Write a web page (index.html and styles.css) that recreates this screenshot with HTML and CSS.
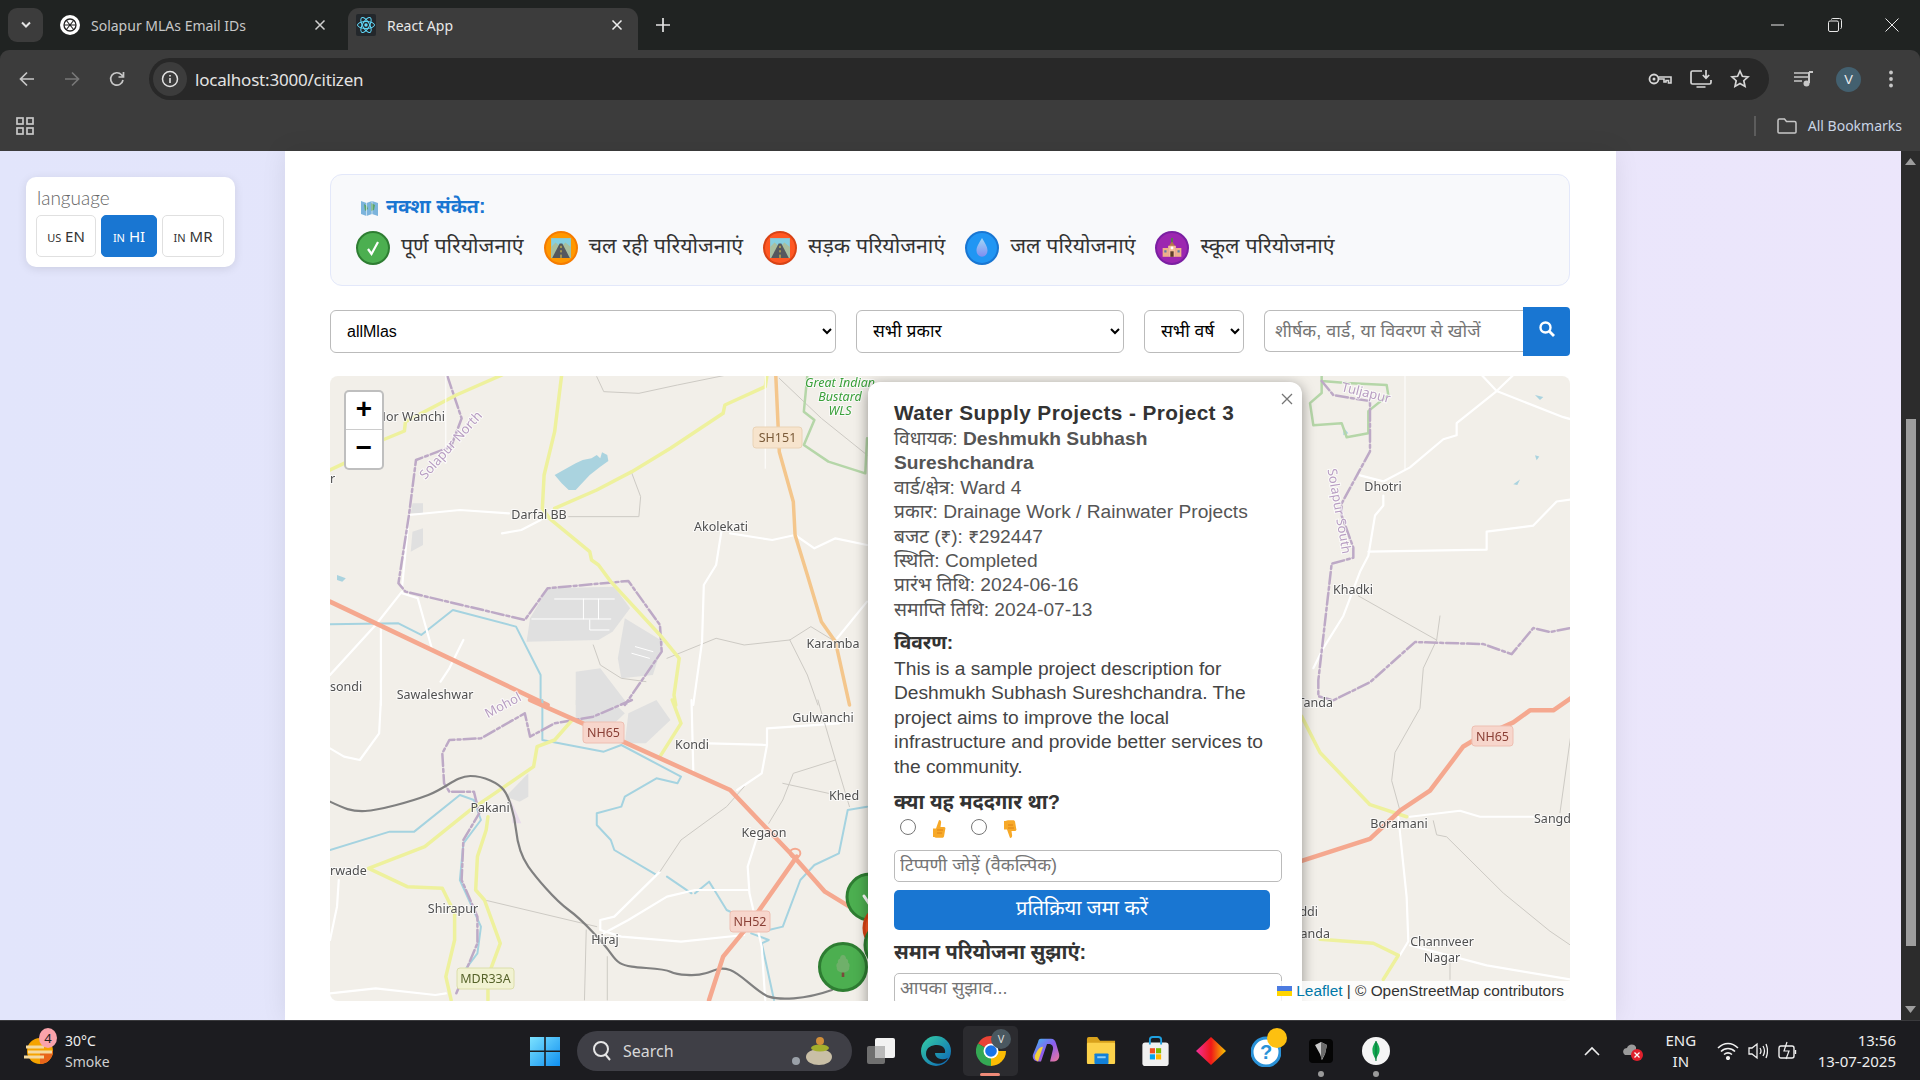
FILE: index.html
```html
<!DOCTYPE html>
<html lang="hi">
<head>
  <meta charset="UTF-8" />
  <title>React App</title>
  <link rel="stylesheet" href="styles.css">
</head>
<body>
  <svg class="sprites" width="0" height="0" aria-hidden="true">
    <defs>
      <symbol id="i-road" viewBox="0 0 20 20">
        <rect x="1" y="1" width="18" height="18" fill="#86cfe0"/>
        <path d="M1 9l4-4 5 4 4-4 5 4v10H1z" fill="#a9bfa0"/>
        <path d="M8.800 6h2.400L18 19H2z" fill="#55585e"/>
        <path d="M10 8v2m0 2v2m0 2v3" stroke="#f3d34a" stroke-width=".9" fill="none"/>
      </symbol>
      <symbol id="i-drop" viewBox="0 0 20 20">
        <defs><linearGradient id="g-drop" x1="0" y1="0" x2="0" y2="1"><stop offset="0" stop-color="#9fd7f7"/><stop offset="1" stop-color="#7f8df0"/></linearGradient></defs>
        <path d="M10 1c3 5 5 8 5 11.500a5 5.500 0 0 1-10 0C5 9 7 6 10 1z" fill="url(#g-drop)"/>
      </symbol>
      <symbol id="i-school" viewBox="0 0 20 20">
        <path d="M10 1v4" stroke="#4c8c3c" stroke-width="1.500"/>
        <path d="M6.500 9L10 4l3.500 5z" fill="#b5754d"/>
        <rect x="6.500" y="8" width="7" height="10" fill="#f3bd97"/>
        <rect x="1.500" y="10" width="5" height="8" fill="#eeb08a"/>
        <rect x="13.500" y="10" width="5" height="8" fill="#eeb08a"/>
        <rect x="8.500" y="13" width="3" height="5" fill="#5b3b2a"/>
        <circle cx="10" cy="10" r="1.300" fill="#fff"/>
        <path d="M3 12h2v2H3zm12 0h2v2h-2z" fill="#5a7fa8"/>
      </symbol>
      <symbol id="i-thumb" viewBox="0 0 20 20">
        <path d="M4 9.500h3L10 1c1.800 0 2.500 1.500 2 3.500L11.500 8H15c1.300 0 1.800 1.300 1.200 2.400L15 17.500c-.4.900-1 1.300-2 1.300H8c-1.500 0-2-.8-4-.8z" fill="#f7a928"/>
        <path d="M8 11h6M8 14h5" stroke="#e08214" stroke-width="1"/>
      </symbol>
      <symbol id="i-tree" viewBox="0 0 20 24">
        <rect x="8.700" y="18" width="2.600" height="5" fill="#7a4a3a"/>
        <path d="M10 1c2 0 3 2 3 3.500 2 .6 2.500 2.500 2 4 1.800 1 2 3.500 1.200 5 .6 2.500-2 5-6.200 5s-6.800-2.500-6.200-5C3 12 3.200 9.500 5 8.500c-.5-1.500 0-3.400 2-4C7 3 8 1 10 1z" fill="#6fb06a"/>
      </symbol>
    </defs>
  </svg>

  <header class="chrome">
    <div class="tabstrip">
      <div class="tab-search"><svg width="12" height="8" viewBox="0 0 12 8"><path d="M2 1.500l4 4 4-4" stroke="#e3e3e3" stroke-width="2" fill="none"/></svg></div>
      <div class="tab">
        <svg class="favicon" width="20" height="20" viewBox="0 0 20 20"><circle cx="10" cy="10" r="10" fill="#fff"/><circle cx="10" cy="10" r="6" fill="none" stroke="#222" stroke-width="1.300"/><path d="M6 5l8 10M14 5L6 15M4 10h12" stroke="#222" stroke-width="1.100"/></svg>
        <span class="tab-title">Solapur MLAs Email IDs</span>
        <svg class="tab-x" width="12" height="12" viewBox="0 0 12 12"><path d="M1.500 1.500l9 9m0-9l-9 9" stroke="#d0d0d0" stroke-width="1.500"/></svg>
      </div>
      <div class="tab active">
        <svg class="favicon" width="20" height="22" viewBox="0 0 20 22"><rect width="20" height="22" rx="2" fill="#23272b"/><g fill="none" stroke="#61dafb" stroke-width="1"><ellipse cx="10" cy="11" rx="8.500" ry="3.500"/><ellipse cx="10" cy="11" rx="8.500" ry="3.500" transform="rotate(60 10 11)"/><ellipse cx="10" cy="11" rx="8.500" ry="3.500" transform="rotate(120 10 11)"/></g><circle cx="10" cy="11" r="1.700" fill="#61dafb"/></svg>
        <span class="tab-title">React App</span>
        <svg class="tab-x" width="12" height="12" viewBox="0 0 12 12"><path d="M1.500 1.500l9 9m0-9l-9 9" stroke="#eee" stroke-width="1.500"/></svg>
      </div>
      <svg class="new-tab" width="14" height="14" viewBox="0 0 14 14"><path d="M7 0v14M0 7h14" stroke="#e3e3e3" stroke-width="1.700"/></svg>
      <div class="win-controls">
        <svg width="14" height="14" viewBox="0 0 14 14"><path d="M0 7h13" stroke="#e8e8e8" stroke-width="1"/></svg>
        <svg width="14" height="14" viewBox="0 0 14 14"><rect x=".5" y="3" width="10" height="10.500" rx="1.500" fill="none" stroke="#e8e8e8"/><path d="M3.500 1.500q0-1 1-1h7q2 0 2 2v7q0 1-1 1" fill="none" stroke="#e8e8e8"/></svg>
        <svg width="14" height="14" viewBox="0 0 14 14"><path d="M.5.500l13 13m0-13l-13 13" stroke="#e8e8e8" stroke-width="1"/></svg>
      </div>
    </div>
    <div class="toolbar">
      <svg class="nav-icon" width="18" height="18" viewBox="0 0 18 18"><path d="M16 9H3m6-6.500L2.500 9 9 15.500" fill="none" stroke="#c7c7c7" stroke-width="1.700"/></svg>
      <svg class="nav-icon" width="18" height="18" viewBox="0 0 18 18"><path d="M2 9h13M9 2.500L15.500 9 9 15.500" fill="none" stroke="#777" stroke-width="1.700"/></svg>
      <svg class="nav-icon" width="18" height="18" viewBox="0 0 18 18"><path d="M15 10a6.200 6.200 0 1 1-1.500-5.200L15.500 7M15.500 2v5h-5" fill="none" stroke="#c7c7c7" stroke-width="1.700"/></svg>
      <div class="omnibox">
        <span class="site-info"><svg width="18" height="18" viewBox="0 0 18 18"><circle cx="9" cy="9" r="7.500" fill="none" stroke="#e3e3e3" stroke-width="1.500"/><path d="M9 8v5M9 5v1.500" stroke="#e3e3e3" stroke-width="1.600"/></svg></span>
        <span class="url">localhost:3000/citizen</span>
        <span class="omni-actions">
          <svg width="24" height="16" viewBox="0 0 24 16"><circle cx="6" cy="8" r="4.500" fill="none" stroke="#d6d6d6" stroke-width="1.800"/><circle cx="6" cy="8" r="1.500" fill="#d6d6d6"/><path d="M10.500 6H23v6h-2.500V9.500H18V11h-2V8h-5.500" fill="none" stroke="#d6d6d6" stroke-width="1.600"/></svg>
          <svg width="22" height="20" viewBox="0 0 22 20"><path d="M12 2H2.500Q1 2 1 3.500v10Q1 15 2.500 15h17q1.500 0 1.500-1.500V11M6.500 18h9" fill="none" stroke="#d6d6d6" stroke-width="1.700"/><path d="M16 1v8m-3.200-3L16 9.200 19.200 6" fill="none" stroke="#d6d6d6" stroke-width="1.700"/></svg>
          <svg width="20" height="20" viewBox="0 0 20 20"><path d="M10 2l2.400 5.300 5.600.6-4.200 3.800 1.200 5.700-5-2.900-5 2.900 1.200-5.700L2 7.900l5.600-.6z" fill="none" stroke="#d6d6d6" stroke-width="1.700"/></svg>
        </span>
      </div>
      <svg class="media-icon" width="20" height="16" viewBox="0 0 20 16"><path d="M0 2h14M0 6h14M0 10h8" stroke="#c7c7c7" stroke-width="1.500"/><path d="M15 1v11" stroke="#c7c7c7" stroke-width="2"/><path d="M15 1h4" stroke="#c7c7c7" stroke-width="2"/><circle cx="12.500" cy="12.500" r="3" fill="#c7c7c7"/></svg>
      <span class="avatar">V</span>
      <svg class="menu-dots" width="6" height="18" viewBox="0 0 6 18"><circle cx="3" cy="2.500" r="1.900" fill="#c7c7c7"/><circle cx="3" cy="9" r="1.900" fill="#c7c7c7"/><circle cx="3" cy="15.500" r="1.900" fill="#c7c7c7"/></svg>
    </div>
    <div class="bookmarks">
      <svg width="18" height="18" viewBox="0 0 18 18" fill="none" stroke="#c7c7c7" stroke-width="1.700"><rect x="1" y="1" width="6" height="6"/><rect x="11" y="1" width="6" height="6"/><rect x="1" y="11" width="6" height="6"/><rect x="11" y="11" width="6" height="6"/></svg>
      <span class="bm-sep"></span>
      <svg width="20" height="16" viewBox="0 0 20 16"><path d="M1 14V2.500Q1 1 2.500 1h5l2 2.500h8Q19 3.500 19 5v9q0 1-1 1H2q-1 0-1-1z" fill="none" stroke="#c7c7c7" stroke-width="1.500"/></svg>
      <span class="bm-label">All Bookmarks</span>
    </div>
  </header>

  <div class="viewport">
    <aside class="side">
      <div class="lang-card">
        <div class="lang-label">language</div>
        <div class="lang-btns">
          <button class="lang-btn en"><span class="cc">US</span> EN</button>
          <button class="lang-btn hi active"><span class="cc">IN</span> HI</button>
          <button class="lang-btn mr"><span class="cc">IN</span> MR</button>
        </div>
      </div>
    </aside>

    <main class="content">
      <section class="legend">
        <h3 class="legend-title">
          <svg width="17" height="18" viewBox="0 0 17 18"><path d="M0 2l5.500 2 5.500-2 6 2v13l-6-2-5.500 2L0 15z" fill="#7cb4dc"/><path d="M3 5l3 2 1 3-3 2zM10 4l4 2-1 5-3 1z" fill="#5aa469"/><path d="M5.500 4v13M11 2v13" stroke="#e9f0f5" stroke-width=".7"/></svg>
          नक्शा संकेत:
        </h3>
        <div class="legend-items">
          <div class="legend-item"><span class="dot green"><svg width="18" height="18" viewBox="0 0 18 18"><path d="M4 10l3.500 5L14 3" fill="none" stroke="#fff" stroke-width="2.200"/></svg></span>पूर्ण परियोजनाएं</div>
          <div class="legend-item"><span class="dot orange"><svg width="22" height="22"><use href="#i-road"/></svg></span>चल रही परियोजनाएं</div>
          <div class="legend-item"><span class="dot red"><svg width="22" height="22"><use href="#i-road"/></svg></span>सड़क परियोजनाएं</div>
          <div class="legend-item"><span class="dot blue"><svg width="22" height="22"><use href="#i-drop"/></svg></span>जल परियोजनाएं</div>
          <div class="legend-item"><span class="dot purple"><svg width="22" height="22"><use href="#i-school"/></svg></span>स्कूल परियोजनाएं</div>
        </div>
      </section>

      <section class="filters">
        <select class="filter mla"><option>allMlas</option></select>
        <select class="filter type"><option>सभी प्रकार</option></select>
        <select class="filter year"><option>सभी वर्ष</option></select>
        <div class="search">
          <input class="search-input" type="text" placeholder="शीर्षक, वार्ड, या विवरण से खोजें">
          <button class="search-btn"><svg width="18" height="18" viewBox="0 0 18 18"><circle cx="7.500" cy="7.500" r="5" fill="none" stroke="#fff" stroke-width="2.400"/><path d="M11.500 11.500L16 16" stroke="#fff" stroke-width="2.800"/></svg></button>
        </div>
      </section>

      <section class="map">
        <svg class="tiles" width="1240" height="625" viewBox="0 0 1240 625">
          <rect width="1240" height="625" fill="#f2efe9"/>

          <!-- left half, top -->
          <g transform="translate(0 -1) scale(.351 .3333)">
            <path class="urban" d="M570 730l50-90 190-5 45 65-50 70-40 25-205 5zM840 730l110 70-30 100-90 10-10-60zM700 890l70-10 80 110H700zM235 385h30v30h-35zM235 470l30-10v50l-35 20z"/>
            <path class="seam" d="M640 672h170M722 672v60M765 672v60M575 732h225M740 735v30h55M870 815l50 15M860 835l50 15"/>
            <path class="water" d="M640 300l60-35 20-10 25-5 15-10 10 10 5-18 15 8 3 18-23 17-30 25-40 45h-20l-20-20zM20 600l25 10-10 10-15-5z"/>
            <path class="river" d="M0 748l195-3 65 35 90-75 180 50 70 145v90"/>
            <path class="track" d="M760 5l20 45 100 5 110-25 140-30M860 295l25 70-5 60-200 0M750 810l20 60 60 40 70 10M960 850l140-60 80 20 130-15 60-40 70 45M1310 795l50 105 30 90M1280 10l120 120 130 110"/>
            <path class="minor" d="M205 640l20-220 145-15 140 10M205 650l-75 100L0 900M205 655l45 15 40 150M145 760v230M380 795l-40 85-25 40M490 475l55-10 55-30M1115 470l-15 100-35 60-5 170-25 190M1140 475l120 20 65-15 55 40 60-30 90 20M1445 790l85-110"/>
            <path class="border" d="M335 5l40 125-30 85-100 40-20 165-30 205 20 25 340 85 65-95 230-22 90 132 5 80-105 160"/>
            <path class="park" d="M1360 0l-10 110 30 25-30 75 70 50 105 35 5-105"/>
            <path class="yellow" d="M0 285l40-20 110-70 62-27 3-28 145-80L490 0M660 0l-20 170-30 130-5 100 20 30 115 100 5 25 20 15 35 50 140 160 55 70-15 110 5 30M640 400l120-55 100-55 110-70 150-105 5-25 115-55 5-35"/>
            <path class="orange-road" d="M1270 0l10 230 40 150 5 100 35 120 40 140 40 60 40 190"/>
            <path class="salmon" d="M0 680l620 310"/>
            <path class="seam" d="M330 0v265M1240 0v280"/>
          </g>

          <!-- left half, bottom -->
          <g transform="translate(0 324) scale(.351 .3333)">
            <path class="urban" d="M700 0h100l40 40-40 40-100-10zM850 40l80-40 40 60-70 70h-60zM500 290l65-70v70l-25 15z"/>
            <path class="landuse" d="M515 300l30 70h-25z"/>
            <path class="river" d="M605 0v120l175 35 50-20 170 95-10 20-60-15-90 55-10 30-70 20v35l40 45 10 30 120 75M960 530l70 50M1040 580l40-35 15 25 35 60 120 60 40-10 50-140 40-45 70-35 25-130 55-10M0 450l170-55h70l130-110 40 15 20 60-50 70-10 110 60 140-10 80-50 70M1200 700l50 20-20 10 35 170"/>
            <path class="minor" d="M1080 130l165 5v-50l205-15 40-30M1030 0l5 210M1245 135l-15 85-70 50M1220 400l-30 100 5 80 35 160 10 160M940 515L810 650l-40 10v30l60 20 170 15 180-20M1190 570l-150 0-80 20-110 70-70 40M25 540l-5 80-20 100M0 880l130-15 170 20 30-5M145 0l-5 100-55 80-45-10-40-25"/>
            <path class="track" d="M940 515l60-95 130-100 50-60M1440 180l-120 40-30 80-40 70M1290 250l130 30M1390 0l50 180 40 140M440 600l320 80M730 690l-5 210M790 770v130"/>
            <path class="border" d="M860 0L750 50 640 70 570 110 555 40 430 115l-90 5-20 40 5 90 15 25h70l15 65-45 80-5 120 45 110v80l-60 150"/>
            <path class="yellow" d="M975 0l25 70-60 100M690 60l-50 60-50 20-10 60-90 65-90 65-130 110-160 65 110 55 100 5 35 75v80l-25 110 15 70M450 350l-5 40-25 80-5 100 25 30 45 130-35 100v70"/>
            <path class="rail" d="M0 305C40 325 60 335 100 333S230 305 280 285 360 228 400 228 480 250 495 270 525 340 530 390 545 470 565 500 640 600 680 630 780 730 800 760 830 795 860 800 950 805 970 815 1040 830 1070 820 1110 800 1140 810 1220 880 1250 890 1350 900 1430 870"/>
            <path class="salmon" d="M570 0l150 70 115 55 305 145 90 100 100 110 80 95 70 45"/>
            <path class="salmon" d="M1080 900l40-130 70-90 140-210"/>
            <ellipse class="roundabout" cx="1325" cy="460" rx="15" ry="14"/>
          </g>

          <!-- right half -->
          <g transform="translate(970 -1) scale(.3333 .4016)">
            <path class="water" d="M640 272l20-12-8 14zM705 50l25 5-10 7zM705 200l13 3-8 9zM130 130l15 15-15 5z"/>
            <path class="track" d="M175 550l235 110-40 70-10 100-75 110-10 70 25 75M410 660l10-60M400 1110l10 35 30 5 170 140 140 95 62 35M812 900l-32 190M450 1450v55"/>
            <path class="minor" d="M590 40L470 120v30l-40 10-100 70-80 35-70-15M590 40L545 0M590 40l50-40M590 40l200 65 22 5M250 300v25l-25 25-20 100-25 40-50 110-60 80-30 50M205 440l355-5v-45l140-15 70-60 42-5M295 1100l25 200 5 110-25 35M330 1100l150-15 60 15h160M330 1420l230 50 252 35"/>
            <path class="park" d="M65 0v45L30 70l10 55 85-5 15 35 65-10V90l60-40-5-25-120-5-75-5"/>
            <path class="border" d="M65 15l35 35 110 15v125L125 320v30l35 80v25l-65 15-40 290v40l45 10 110-45 135-100 205 5 85 25 65-65 50 10 62-10"/>
            <path class="yellow" d="M5 850l55 90 150 130 110 30M60 1405l160 10 75 30-45 60"/>
            <path class="salmon" d="M5 1210l205-55 90-70 90-50 100-110 30-15 120-45 50-30h70l52-30"/>
            <path class="seam" d="M315 0v235"/>
          </g>

          <!-- markers -->
          <g class="marker"><circle cx="540" cy="521" r="23" fill="#4caf50" stroke="#2e7d32" stroke-width="3"/><path d="M534 520l6 9" stroke="#fff" stroke-width="3"/></g>
          <circle cx="557" cy="552" r="23" fill="#ff5722" stroke="#d84315" stroke-width="3"/>
          <circle cx="558" cy="569" r="23" fill="#4caf50" stroke="#2e7d32" stroke-width="3"/>
          <circle cx="513" cy="591" r="23.500" fill="#4caf50" stroke="#2e7d32" stroke-width="3"/>
          <use href="#i-tree" x="503" y="578" width="20" height="24"/>

          <!-- labels -->
          <g class="labels">
            <text x="115" y="45" text-anchor="end">Mor Wanchi</text>
            <text x="209" y="143" text-anchor="middle">Darfal BB</text>
            <text x="391" y="155" text-anchor="middle">Akolekati</text>
            <text x="503" y="272" text-anchor="middle">Karamba</text>
            <text x="105" y="323" text-anchor="middle">Sawaleshwar</text>
            <text x="0" y="315">sondi</text>
            <text x="0" y="107">r</text>
            <text x="493" y="346" text-anchor="middle">Gulwanchi</text>
            <text x="362" y="373" text-anchor="middle">Kondi</text>
            <text x="514" y="424" text-anchor="middle">Khed</text>
            <text x="434" y="461" text-anchor="middle">Kegaon</text>
            <text x="160" y="436" text-anchor="middle">Pakani</text>
            <text x="0" y="499">rwade</text>
            <text x="123" y="537" text-anchor="middle">Shirapur</text>
            <text x="275" y="568" text-anchor="middle">Hiraj</text>
            <text x="1053" y="115" text-anchor="middle">Dhotri</text>
            <text x="1023" y="218" text-anchor="middle">Khadki</text>
            <text x="1003" y="331" text-anchor="end">Tanda</text>
            <text x="1069" y="452" text-anchor="middle">Boramani</text>
            <text x="1204" y="447">Sangd</text>
            <text x="988" y="540" text-anchor="end">ddi</text>
            <text x="1000" y="562" text-anchor="end">anda</text>
            <text x="1112" y="570" text-anchor="middle">Channveer</text>
            <text x="1112" y="586" text-anchor="middle">Nagar</text>
          </g>
          <g class="labels region">
            <text transform="translate(124 72) rotate(-48)" text-anchor="middle">Solapur North</text>
            <text transform="translate(175 333) rotate(-28)" text-anchor="middle">Mohol</text>
            <text transform="translate(1005 136) rotate(80)" text-anchor="middle">Solapur South</text>
            <text transform="translate(1035 21) rotate(14)" text-anchor="middle">Tuljapur</text>
          </g>
          <g class="labels park-label">
            <text x="510" y="11" text-anchor="middle">Great Indian</text>
            <text x="510" y="25" text-anchor="middle">Bustard</text>
            <text x="510" y="39" text-anchor="middle">WLS</text>
          </g>
          <g class="shield sh"><rect x="423" y="51" width="49" height="21" rx="3"/><text x="447.500" y="66" text-anchor="middle">SH151</text></g>
          <g class="shield nh"><rect x="253" y="346" width="41" height="21" rx="3"/><text x="273.500" y="361" text-anchor="middle">NH65</text></g>
          <g class="shield nh"><rect x="400" y="535" width="40" height="21" rx="3"/><text x="420" y="550" text-anchor="middle">NH52</text></g>
          <g class="shield nh"><rect x="1142" y="350" width="41" height="20" rx="3"/><text x="1162.500" y="365" text-anchor="middle">NH65</text></g>
          <g class="shield mdr"><rect x="127" y="592" width="57" height="21" rx="3"/><text x="155.500" y="607" text-anchor="middle">MDR33A</text></g>
        </svg>

        <div class="zoom-ctl">
          <div class="zoom-btn">+</div>
          <div class="zoom-btn">−</div>
        </div>

        <div class="popup">
          <svg class="popup-x" width="12" height="12" viewBox="0 0 12 12"><path d="M1 1l10 10m0-10L1 11" stroke="#757575" stroke-width="1.300"/></svg>
          <div class="popup-title">Water Supply Projects - Project 3</div>
          <div>विधायक: <strong>Deshmukh Subhash Sureshchandra</strong></div>
          <div>वार्ड/क्षेत्र: Ward 4</div>
          <div>प्रकार: Drainage Work / Rainwater Projects</div>
          <div>बजट (₹): ₹292447</div>
          <div>स्थिति: Completed</div>
          <div>प्रारंभ तिथि: 2024-06-16</div>
          <div>समाप्ति तिथि: 2024-07-13</div>
          <h4 class="popup-head desc-head">विवरण:</h4>
          <p class="popup-desc">This is a sample project description for Deshmukh Subhash Sureshchandra. The project aims to improve the local infrastructure and provide better services to the community.</p>
          <h4 class="popup-head help-head">क्या यह मददगार था?</h4>
          <div class="votes">
            <input type="radio" name="vote"><svg width="20" height="20"><use href="#i-thumb"/></svg>
            <input type="radio" name="vote"><svg class="flip" width="20" height="20"><use href="#i-thumb"/></svg>
          </div>
          <input class="popup-input" type="text" placeholder="टिप्पणी जोड़ें (वैकल्पिक)">
          <button class="popup-btn">प्रतिक्रिया जमा करें</button>
          <h4 class="popup-head suggest-head">समान परियोजना सुझाएं:</h4>
          <input class="popup-input" type="text" placeholder="आपका सुझाव...">
        </div>

        <div class="attribution">
          <svg width="15" height="10" viewBox="0 0 15 10"><rect width="15" height="5" fill="#4c7be0"/><rect y="5" width="15" height="5" fill="#ffd500"/></svg>
          <span><a class="attr-link">Leaflet</a> | © OpenStreetMap contributors</span>
        </div>
      </section>
    </main>

    <div class="spacer"></div>
    <div class="scrollbar">
      <svg width="13" height="9" viewBox="0 0 13 9"><path d="M6.500 1L12 8H1z" fill="#9e9e9e"/></svg>
      <div class="thumb"></div>
      <svg width="13" height="9" viewBox="0 0 13 9"><path d="M6.500 8L12 1H1z" fill="#9e9e9e"/></svg>
    </div>
  </div>

  <footer class="taskbar">
    <div class="weather">
      <svg class="weather-icon" width="30" height="30" viewBox="0 0 30 30"><circle cx="16" cy="15" r="13" fill="#f5a300"/><path d="M16 15h13a13 13 0 0 1-13 13z" fill="#e8641b"/><path d="M2 11h18M4 16h24M0 21h20" stroke="#f4d9a0" stroke-width="3"/></svg>
      <span class="weather-badge">4</span>
      <div class="weather-text"><div class="temp">30°C</div><div class="cond">Smoke</div></div>
    </div>
    <svg class="win-logo" width="30" height="30" viewBox="0 0 30 30"><defs><linearGradient id="g-win" x1="0" y1="0" x2="1" y2="1"><stop offset="0" stop-color="#7ce2ff"/><stop offset="1" stop-color="#0f8ff0"/></linearGradient></defs><path d="M0 1h14.200v13.500H0zM15.800 1H30v13.500H15.800zM0 16h14.200v14H0zM15.800 16H30v14H15.800z" fill="url(#g-win)"/></svg>
    <div class="tb-search">
      <svg width="20" height="22" viewBox="0 0 20 22"><circle cx="9" cy="9" r="7" fill="none" stroke="#e6e6e6" stroke-width="2"/><path d="M13.500 14.500L18 20" stroke="#e6e6e6" stroke-width="2"/></svg>
      <span class="tb-search-text">Search</span>
      <svg class="pebbles" width="42" height="28" viewBox="0 0 42 28"><ellipse cx="29" cy="20" rx="13" ry="8" fill="#c9bfa6"/><ellipse cx="30" cy="11" rx="9" ry="3.500" fill="#a3ae2c"/><ellipse cx="30" cy="4" rx="4" ry="4" fill="#d08e3a"/><ellipse cx="6" cy="24" rx="4" ry="4" fill="#9aa0a8"/></svg>
    </div>
    <div class="tb-apps">
      <span class="tb-app"><svg width="28" height="26" viewBox="0 0 28 26"><rect x="0" y="8" width="18" height="18" rx="2" fill="#6f6f6f"/><rect x="8" y="0" width="20" height="20" rx="2" fill="#f2f2f2"/><rect x="8" y="8" width="10" height="12" fill="#b9b9b9"/></svg></span>
      <span class="tb-app"><svg width="30" height="30" viewBox="0 0 30 30"><defs><linearGradient id="g-edge" x1="0" y1="0" x2="1" y2="1"><stop offset="0" stop-color="#35d0a4"/><stop offset="1" stop-color="#0c62b8"/></linearGradient></defs><circle cx="15" cy="15" r="15" fill="url(#g-edge)"/><path d="M5 18c0-7 6-9 11-9 6 0 9 4 8 8h-10c0 5 6 8 13 5-3 5-9 7-14 5-5-2-8-5-8-9z" fill="#1c1c20"/></svg></span>
      <span class="tb-app chrome-app">
        <svg width="30" height="30" viewBox="0 0 30 30"><path d="M15 15L2 7.500A15 15 0 0 1 28 7.500z" fill="#ea4335"/><path d="M15 15h15a15 15 0 0 1-15 15z" fill="#fbbc04"/><path d="M15 15L15 30A15 15 0 0 1 2 7.500z" fill="#34a853"/><circle cx="15" cy="15" r="7.500" fill="#fff"/><circle cx="15" cy="15" r="5.800" fill="#1a73e8"/></svg>
        <span class="chrome-badge">V</span>
        <span class="chrome-under"></span>
      </span>
      <span class="tb-app"><svg width="28" height="26" viewBox="0 0 28 30" preserveAspectRatio="none"><defs><linearGradient id="g-cop" x1="0" y1="0" x2="1" y2="1"><stop offset="0" stop-color="#3bc0f0"/><stop offset=".5" stop-color="#8a5cf0"/><stop offset="1" stop-color="#f0789a"/></linearGradient></defs><path d="M9 1h10c3 0 4 2 5 5l3 12c1 5-1 9-5 9h-4l3-14c.5-3-1-6-4-6h-2L9 27H6c-4 0-6-4-5-8L6 5c.7-3 1-4 3-4z" fill="url(#g-cop)"/><path d="M3 20c-1 3 0 6 3 7l5-17C7 10 5 15 3 20z" fill="#f2d03c"/></svg></span>
      <span class="tb-app"><svg width="30" height="27" viewBox="0 0 32 28" preserveAspectRatio="none"><path d="M1 2q0-2 2-2h9l3 4h16v22H1z" fill="#d9a21c"/><rect x="1" y="6" width="30" height="22" rx="1" fill="#fcd24b"/><rect x="9" y="17" width="15" height="11" rx="1" fill="#1280d8"/><rect x="12" y="20" width="9" height="2" fill="#8ed0f8"/></svg></span>
      <span class="tb-app"><svg width="29" height="30" viewBox="0 0 30 32"><rect x="1" y="7" width="28" height="25" rx="3" fill="#f0f0f0"/><path d="M9 9V4q0-3 3-3h6q3 0 3 3v5" fill="none" stroke="#1fa0e0" stroke-width="2"/><path d="M9 13h5.500v5.500H9z" fill="#f25022"/><path d="M15.500 13H21v5.500h-5.500z" fill="#7fba00"/><path d="M9 19.500h5.500V25H9z" fill="#00a4ef"/><path d="M15.500 19.500H21V25h-5.500z" fill="#ffb900"/></svg></span>
      <span class="tb-app"><svg width="30" height="28" viewBox="0 0 30 28"><defs><linearGradient id="g-dia" x1="0" y1="0" x2="1" y2="0"><stop offset="0" stop-color="#f2309a"/><stop offset=".5" stop-color="#f01818"/><stop offset="1" stop-color="#f5c800"/></linearGradient></defs><path d="M15 0l15 14-15 14L0 14z" fill="url(#g-dia)"/></svg></span>
      <span class="tb-app help-app"><svg width="30" height="32" viewBox="0 0 30 32"><circle cx="15" cy="17" r="14" fill="#fff" stroke="#2a92d8" stroke-width="3"/><text class="help-mark" x="15" y="24" text-anchor="middle">?</text></svg><span class="help-dot"></span></span>
      <span class="tb-app running"><svg width="24" height="24" viewBox="0 0 24 24"><rect width="24" height="24" rx="4" fill="#050505"/><path d="M6 6l6-3 6 3-2 9-3 6-2-6z" fill="#c9c9c9"/><path d="M12 3v18l1-1 3-5 2-9z" fill="#6b6b6b"/></svg></span>
      <span class="tb-app running"><svg width="28" height="28" viewBox="0 0 28 28"><circle cx="14" cy="14" r="14" fill="#f5f5f5"/><path d="M14 4c3 4 4 7 3.500 10-.5 4-3.500 6-3.500 10-1-4-3.500-6-3.500-10C10 11 11 8 14 4z" fill="#13aa52"/><path d="M14 4v20" stroke="#0b6e36"/></svg></span>
    </div>
    <div class="tray">
      <svg width="16" height="10" viewBox="0 0 16 10"><path d="M1 9l7-7 7 7" fill="none" stroke="#eee" stroke-width="1.600"/></svg>
      <svg class="tray-cloud" width="22" height="20" viewBox="0 0 22 20"><path d="M2 13c-2-3 0-6 3-6 1-4 7-5 9-1v8H3z" fill="#9a9a9a"/><circle cx="15" cy="14" r="6" fill="#e0202c"/><path d="M12.500 11.500l5 5m0-5l-5 5" stroke="#fff" stroke-width="1.300"/></svg>
      <div class="lang-ind"><div>ENG</div><div>IN</div></div>
      <svg class="tray-wifi" width="22" height="18" viewBox="0 0 22 18" fill="none" stroke="#f0f0f0" stroke-width="1.600"><path d="M1 6c6-6 14-6 20 0M4 9.500c4-4 10-4 14 0M7 12.500c2.500-2 5.500-2 8 0"/><circle cx="11" cy="16" r="1.300" fill="#f0f0f0"/></svg>
      <svg class="tray-vol" width="20" height="18" viewBox="0 0 20 18" fill="none" stroke="#f0f0f0" stroke-width="1.300"><path d="M1 6h3l5-4v14l-5-4H1zM12 6q2 3 0 6M15 4q3 5 0 10M18 2q3 7 0 14"/></svg>
      <svg class="tray-bat" width="20" height="20" viewBox="0 0 20 20" fill="none" stroke="#f0f0f0" stroke-width="1.400"><rect x="1" y="5" width="15" height="12" rx="2"/><path d="M17.500 9v4"/><path d="M9 1L6 10h5l-3 8" stroke-width="1.200"/></svg>
      <div class="clock"><div>13:56</div><div>13-07-2025</div></div>
    </div>
  </footer>
</body>
</html>
```

FILE: styles.css
```css
* {
  box-sizing: border-box;
}

html, body {
  margin: 0;
  height: 100%;
  overflow: hidden;
}

body {
  display: flex;
  flex-direction: column;
  width: 1920px;
  height: 1080px;
  font-family: "Liberation Sans", "Noto Sans", sans-serif;
}

.sprites {
  position: absolute;
}

/* browser frame */
.chrome {
  height: 151px;
  background: #202322;
  flex: none;
}

.tabstrip {
  height: 50px;
  display: flex;
  align-items: flex-end;
  position: relative;
  padding-left: 8px;
}

.tab-search {
  width: 35px;
  height: 34px;
  margin-bottom: 8px;
  background: #3c3c3c;
  border-radius: 9px;
  display: flex;
  align-items: center;
  justify-content: center;
}

.tab {
  width: 290px;
  height: 42px;
  margin-left: 9px;
  padding: 0 15px 8px 8px;
  display: flex;
  align-items: center;
  border-radius: 11px 11px 0 0;
  color: #c7c7c7;
  font: 14px "Noto Sans", sans-serif;
}

.tab:nth-child(2) {
  width: 289px;
  margin-right: -2px;
}

.tab.active {
  background: #3c3c3c;
  color: #e8e8e8;
}

.favicon {
  flex: none;
  margin-right: 11px;
}

.tab-title {
  flex: 1;
  white-space: nowrap;
}

.new-tab {
  margin: 0 0 18px 18px;
}

.win-controls {
  margin: 0 21px 18px auto;
  display: flex;
  gap: 43px;
}

.toolbar {
  height: 50px;
  background: #3c3c3c;
  border-radius: 9px 9px 0 0;
  display: flex;
  align-items: center;
  padding: 8px 0 0 18px;
}

.nav-icon {
  margin-right: 27px;
}

.omnibox {
  width: 1620px;
  height: 42px;
  margin-left: -4px;
  background: #282828;
  border-radius: 21px;
  display: flex;
  align-items: center;
  padding: 0 19px 0 4px;
  color: #e3e3e3;
}

.site-info {
  width: 34px;
  height: 34px;
  border-radius: 50%;
  background: #3c3c3c;
  display: flex;
  align-items: center;
  justify-content: center;
}

.url {
  margin-left: 8px;
  font: 17px "Noto Sans", sans-serif;
  letter-spacing: -.2px;
}

.omni-actions {
  margin-left: auto;
  display: flex;
  align-items: center;
  gap: 18px;
}

.media-icon {
  margin-left: 25px;
}

.avatar {
  width: 25px;
  height: 25px;
  margin-left: 22px;
  border-radius: 50%;
  background: #43606f;
  color: #eee;
  font-size: 13px;
  display: flex;
  align-items: center;
  justify-content: center;
}

.menu-dots {
  margin-left: 27px;
}

.bookmarks {
  height: 51px;
  background: #3c3c3c;
  display: flex;
  align-items: center;
  padding: 0 18px 0 16px;
  color: #c9d4e4;
}

.bm-sep {
  width: 2px;
  height: 20px;
  background: #5c5c5c;
  margin: 0 21px 0 auto;
}

.bm-label {
  margin-left: 11px;
  font: 14px "Noto Sans", sans-serif;
}

/* page */
.viewport {
  height: 869px;
  display: flex;
  background: linear-gradient(90deg, #e2e5fb, #ece6fb);
}

.side {
  width: 285px;
  flex: none;
  padding: 26px 0 0 26px;
}

.lang-card {
  width: 209px;
  height: 90px;
  padding: 10px 10px;
  background: #fff;
  border-radius: 10px;
  box-shadow: 0 2px 10px rgba(0, 0, 0, .1);
}

.lang-label {
  color: #666;
  font: 300 19px/22px Lato, sans-serif;
  margin: 0 0 6px 1px;
}

.lang-btns {
  display: flex;
  gap: 5px;
}

.lang-btn {
  height: 42px;
  width: 60px;
  padding: 0;
  background: #fff;
  border: 1px solid #e0e0e0;
  border-radius: 5px;
  color: #333;
  font: 15px "Noto Sans", sans-serif;
}

.lang-btn.hi {
  width: 56px;
  background: #1976d2;
  border-color: #1976d2;
  color: #fff;
}

.lang-btn.mr {
  width: 62px;
}

.cc {
  font-size: 11px;
}

.content {
  width: 1331px;
  flex: none;
  padding: 23px 46px 0 45px;
  background: #fff;
  box-shadow: 0 0 24px rgba(0, 0, 0, .08);
  font-family: "Liberation Sans", "Noto Sans Devanagari", "Noto Sans", sans-serif;
}

.spacer {
  flex: 1;
}

.scrollbar {
  width: 19px;
  flex: none;
  background: #2c2c2c;
  display: flex;
  flex-direction: column;
  align-items: center;
  padding: 6px 0;
}

.thumb {
  width: 10px;
  height: 527px;
  margin: 253px 0 auto;
  background: #9e9e9e;
}

.legend {
  height: 112px;
  padding: 21px 25px;
  background: #f8f9fb;
  border: 1px solid #e3e8fa;
  border-radius: 12px;
}

.legend-title {
  margin: 0 0 11px 5px;
  height: 24px;
  display: flex;
  align-items: center;
  gap: 8px;
  color: #1976d2;
  font-size: 19.500px;
  font-weight: bold;
}

.legend-items {
  display: flex;
  gap: 20px;
}

.legend-item {
  display: flex;
  align-items: center;
  gap: 11px;
  color: #333;
  font-size: 21.300px;
  white-space: nowrap;
}

.dot {
  width: 34px;
  height: 34px;
  flex: none;
  border-radius: 50%;
  border: 2px solid;
  display: flex;
  align-items: center;
  justify-content: center;
}

.dot.green { background: #4caf50; border-color: #2e7d32; }
.dot.orange { background: #ff9800; border-color: #f57c00; }
.dot.red { background: #ff5722; border-color: #d84315; }
.dot.blue { background: #2196f3; border-color: #1976d2; }
.dot.purple { background: #9c27b0; border-color: #7b1fa2; }

.filters {
  height: 50px;
  margin-top: 20px;
  display: flex;
  align-items: center;
  gap: 20px;
}

.filter {
  height: 43px;
  padding: 0 12px;
  background: #fff;
  border: 1px solid #bbb;
  border-radius: 6px;
  color: #000;
  font: 16px "Liberation Sans", "Noto Sans Devanagari", sans-serif;
}

.filter.mla { width: 506px; }
.filter.type { width: 268px; font-size: 17.500px; }
.filter.year { width: 100px; font-size: 17.500px; }

.search {
  flex: 1;
  display: flex;
  align-items: center;
}

.search-input {
  flex: 1;
  min-width: 0;
  height: 42px;
  padding: 0 10px;
  border: 1px solid #bbb;
  border-right: none;
  border-radius: 6px 0 0 6px;
  font: 18px "Liberation Sans", "Noto Sans Devanagari", sans-serif;
}

.search-btn {
  width: 47px;
  height: 49px;
  padding: 0 0 5px;
  border: none;
  border-radius: 0 4px 4px 0;
  background: #1976d2;
  display: flex;
  align-items: center;
  justify-content: center;
}

/* map */
.map {
  position: relative;
  height: 625px;
  margin-top: 20px;
  border-radius: 8px;
  overflow: hidden;
}

.tiles {
  display: block;
  filter: blur(.35px);
}

.tiles path,
.tiles ellipse.roundabout {
  fill: none;
  stroke-linejoin: round;
  stroke-linecap: round;
  vector-effect: non-scaling-stroke;
}

.tiles path.urban { fill: #e0e0e0; stroke: none; }
.tiles path.landuse { fill: #e8dcea; stroke: none; }
.tiles path.water { fill: #aad3df; stroke: none; }
.river { stroke: #a5d3e0; stroke-width: 2; }
.track { stroke: #cdcac4; stroke-width: 1; }
.minor { stroke: #fff; stroke-width: 2.200; }
.border { stroke: #bda9c6; stroke-width: 2.500; stroke-dasharray: 12 3 3 3; }
.park { stroke: #b5d6a8; stroke-width: 2.500; }
.yellow { stroke: #eef19d; stroke-width: 3.500; }
.orange-road { stroke: #f4c68c; stroke-width: 3.500; }
.salmon { stroke: #f5a88f; stroke-width: 4.500; }
.rail { stroke: #808080; stroke-width: 2.200; }
.seam { stroke: #fff; stroke-width: 1; }
.roundabout { stroke: #f5a88f; stroke-width: 2; }

.labels text {
  font: 12.500px "Noto Sans", sans-serif;
  fill: #4f4f4f;
  stroke: rgba(255, 255, 255, .7);
  stroke-width: 2px;
  paint-order: stroke;
}

.labels.region text {
  fill: #b89ec2;
  font-size: 13px;
}

.labels.park-label text {
  fill: #3aa03a;
  font-style: italic;
}

.shield text {
  font: 12.500px "Noto Sans", sans-serif;
}

.shield.sh rect { fill: #f7e4cd; stroke: #ead3b6; }
.shield.sh text { fill: #7a5a38; }
.shield.nh rect { fill: #f7d6cc; stroke: #eebfb2; }
.shield.nh text { fill: #8a3f35; }
.shield.mdr rect { fill: #f1f2d2; stroke: #dcdeaa; }
.shield.mdr text { fill: #56632a; }

.zoom-ctl {
  position: absolute;
  left: 14px;
  top: 14px;
  width: 40px;
  border: 2px solid rgba(0, 0, 0, .25);
  border-radius: 5px;
  background: #fff;
}

.zoom-btn {
  height: 38px;
  display: flex;
  align-items: center;
  justify-content: center;
  color: #000;
  font: bold 28px "Liberation Mono", monospace;
}

.zoom-btn:first-child {
  border-bottom: 1px solid #ccc;
}

.popup {
  position: absolute;
  left: 538px;
  top: 6px;
  width: 434px;
  height: 700px;
  padding: 19px 32px 0 26px;
  background: #fff;
  border-radius: 12px;
  box-shadow: 0 3px 14px rgba(0, 0, 0, .4);
  color: #555;
  font-size: 19.200px;
  line-height: 24.400px;
}

.popup-x {
  position: absolute;
  right: 9px;
  top: 11px;
}

.popup-title {
  margin-bottom: 1.500px;
  color: #333;
  font-size: 20.800px;
  font-weight: bold;
  letter-spacing: .42px;
}

.popup-head {
  margin: 0;
  color: #333;
  font-size: 20px;
  font-weight: bold;
}

.desc-head {
  margin-top: 9px;
  font-size: 19.200px;
}

.help-head { margin-top: 11px; }
.suggest-head { margin-top: 10px; }

.popup-desc {
  margin: 1.500px 0 0;
  color: #444;
}

.votes {
  height: 35px;
  padding: 4px 0 0 6px;
  display: flex;
  align-items: flex-start;
}

.votes input {
  width: 16px;
  height: 16px;
  margin: 0 13px 0 0;
}

.votes svg {
  margin-right: 22px;
}

.flip {
  transform: rotate(180deg) scaleX(-1);
}

.popup-input {
  display: block;
  width: 388px;
  height: 32px;
  padding: 0 5px;
  border: 1px solid #bbb;
  border-radius: 5px;
  font: 18px "Liberation Sans", "Noto Sans Devanagari", sans-serif;
}

.popup-btn {
  display: block;
  width: 376px;
  height: 40px;
  margin-top: 8px;
  border: none;
  border-radius: 5px;
  background: #1976d2;
  color: #fff;
  font: 20px "Liberation Sans", "Noto Sans Devanagari", sans-serif;
}

.suggest-head + .popup-input {
  margin-top: 9px;
}

.attribution {
  position: absolute;
  right: 0;
  bottom: 0;
  height: 20px;
  padding: 0 6px 0 5px;
  background: rgba(255, 255, 255, .8);
  color: #333;
  font-size: 15.400px;
  line-height: 20px;
  display: flex;
  align-items: center;
  gap: 4px;
  white-space: nowrap;
}

.attr-link {
  color: #0078a8;
}

/* windows taskbar */
.taskbar {
  height: 60px;
  flex: none;
  display: flex;
  align-items: center;
  background: #1c1c20;
  border-top: 1px solid #3a3a3d;
  color: #eee;
  font-family: "Noto Sans", sans-serif;
}

.weather {
  width: 530px;
  position: relative;
  display: flex;
  align-items: center;
  padding-left: 24px;
}

.weather-badge {
  position: absolute;
  left: 39px;
  top: -2px;
  width: 18px;
  height: 20px;
  border-radius: 50%;
  background: #f9a3ab;
  color: #222;
  font-size: 13px;
  text-align: center;
  line-height: 20px;
}

.weather-text {
  margin-left: 11px;
  font-size: 14px;
  line-height: 21px;
}

.cond {
  color: #cfcfcf;
}

.tb-search {
  width: 275px;
  height: 40px;
  margin-left: 17px;
  padding: 0 20px 0 15px;
  border-radius: 20px;
  background: #3f3f46;
  display: flex;
  align-items: center;
  color: #d8d8d8;
  font-size: 16px;
}

.tb-search-text {
  margin-left: 11px;
}

.pebbles {
  margin-left: auto;
}

.tb-apps {
  display: flex;
  margin-left: 1px;
}

.tb-app {
  width: 55px;
  height: 50px;
  position: relative;
  display: flex;
  align-items: center;
  justify-content: center;
}

.chrome-app {
  background: #2b2b2f;
  border-radius: 5px;
}

.chrome-badge {
  position: absolute;
  right: 7px;
  top: 3px;
  width: 20px;
  height: 20px;
  border-radius: 50%;
  background: #4a5860;
  color: #ddd;
  font-size: 11px;
  line-height: 20px;
  text-align: center;
}

.chrome-under {
  position: absolute;
  left: 17px;
  bottom: 0;
  width: 20px;
  height: 3px;
  border-radius: 2px;
  background: #f08a78;
}

.help-mark {
  fill: #2a92d8;
  font: bold 20px "Liberation Sans", sans-serif;
}

.help-dot {
  position: absolute;
  left: 29px;
  top: 2px;
  width: 20px;
  height: 20px;
  border-radius: 50%;
  background: #fdc010;
}

.running::after {
  content: "";
  position: absolute;
  left: 25px;
  bottom: -1px;
  width: 6px;
  height: 6px;
  border-radius: 50%;
  background: #9a9a9a;
}

.tray {
  margin-left: auto;
  padding-right: 24px;
  display: flex;
  align-items: center;
  font-size: 15px;
  line-height: 21px;
}

.tray-cloud { margin-left: 22px; }

.lang-ind {
  margin: 0 0 0 22px;
  text-align: center;
}

.tray-wifi { margin-left: 21px; }
.tray-vol { margin-left: 9px; }
.tray-bat { margin-left: 10px; }

.clock {
  margin-left: 19.500px;
  text-align: right;
}
```
